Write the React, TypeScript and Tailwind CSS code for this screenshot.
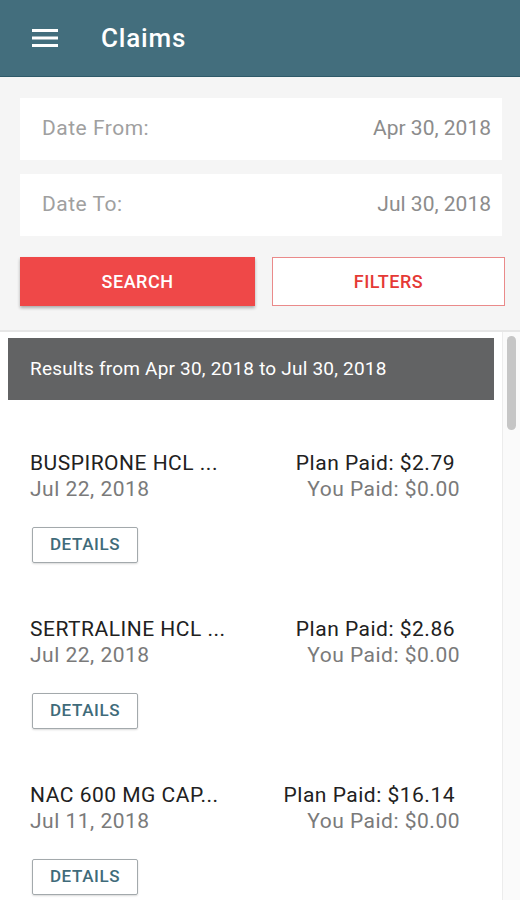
import React from "react"

const claims = [
  { name: "BUSPIRONE HCL ...", date: "Jul 22, 2018", plan: "$2.79", you: "$0.00" },
  { name: "SERTRALINE HCL ...", date: "Jul 22, 2018", plan: "$2.86", you: "$0.00" },
  { name: "NAC 600 MG CAP...", date: "Jul 11, 2018", plan: "$16.14", you: "$0.00" },
]

function DateRow({ label, value }: { label: string; value: string }) {
  return (
    <div className="h-[62px] bg-white flex items-center justify-between pl-[22px] pr-[11px] text-[21px]">
      <span className="text-[#a0a0a0] tracking-[0.5px]">{label}</span>
      <span className="text-[#8c8c8c]">{value}</span>
    </div>
  )
}

function ClaimItem({ name, date, plan, you }: (typeof claims)[number]) {
  return (
    <div className="pl-[30px] pr-[42px] pb-[53px]">
      <div className="flex justify-between text-[21px] leading-[26px] tracking-[0.5px]">
        <div>
          <div className="text-[#212121]">{name}</div>
          <div className="text-[#7a7a7a]">{date}</div>
        </div>
        <div className="text-right">
          <div className="text-[#212121] pr-[5px]">Plan Paid: {plan}</div>
          <div className="text-[#7a7a7a]">You Paid: {you}</div>
        </div>
      </div>
      <button className="mt-[25px] ml-[2px] w-[106px] h-[36px] border border-[#a3a9ac] rounded-[2px] shadow-[0_1px_2px_rgba(0,0,0,0.15)] text-[#3f6b7a] text-[17px] font-medium tracking-[0.6px]">
        DETAILS
      </button>
    </div>
  )
}

export default function App() {
  return (
    <div className="w-[520px] h-[900px] overflow-hidden bg-white font-['Roboto',sans-serif]">
      <header className="h-[77px] bg-[#436e7d] border-b border-[#2e5a69] flex items-center pl-[32px]">
        <svg width="26" height="20" viewBox="0 0 26 20" className="mr-[43px]">
          <rect x="0" y="1" width="26" height="3" fill="#fff" />
          <rect x="0" y="8.5" width="26" height="3" fill="#fff" />
          <rect x="0" y="16" width="26" height="3" fill="#fff" />
        </svg>
        <h1 className="text-white text-[26px] font-medium tracking-[0.8px]">Claims</h1>
      </header>

      <section className="bg-[#f5f5f5] pt-[21px] pb-[24px] px-[18px] border-b-2 border-[#e6e6e6]">
        <div className="flex flex-col gap-[14px] pl-[2px]">
          <DateRow label="Date From:" value="Apr 30, 2018" />
          <DateRow label="Date To:" value="Jul 30, 2018" />
        </div>
        <div className="flex mt-[21px] pl-[2px] gap-[17px]">
          <button className="shrink-0 w-[235px] h-[49px] bg-[#ef4848] text-white text-[18px] font-medium tracking-[0.5px] shadow-[0_2px_3px_rgba(0,0,0,0.3)]">
            SEARCH
          </button>
          <button className="shrink-0 w-[233px] h-[49px] bg-white border border-[#ea8a8a] text-[#e53935] text-[18px] font-medium tracking-[0.5px]">
            FILTERS
          </button>
        </div>
      </section>

      <div className="flex">
        <div className="w-[502px] pt-[6px]">
          <div className="ml-[8px] w-[486px] h-[62px] bg-[#626364] flex items-center pl-[22px] text-white text-[19px] tracking-[0.2px]">
            Results from Apr 30, 2018 to Jul 30, 2018
          </div>
          <div className="pt-[50px]">
            {claims.map((c) => (
              <ClaimItem key={c.name} {...c} />
            ))}
          </div>
        </div>
        <div className="w-[18px] border-l border-[#ececec] bg-[#fafafa] pt-[4px] flex justify-center">
          <div className="w-[9px] h-[94px] rounded-full bg-[#c6c6c6]" />
        </div>
      </div>
    </div>
  )
}
